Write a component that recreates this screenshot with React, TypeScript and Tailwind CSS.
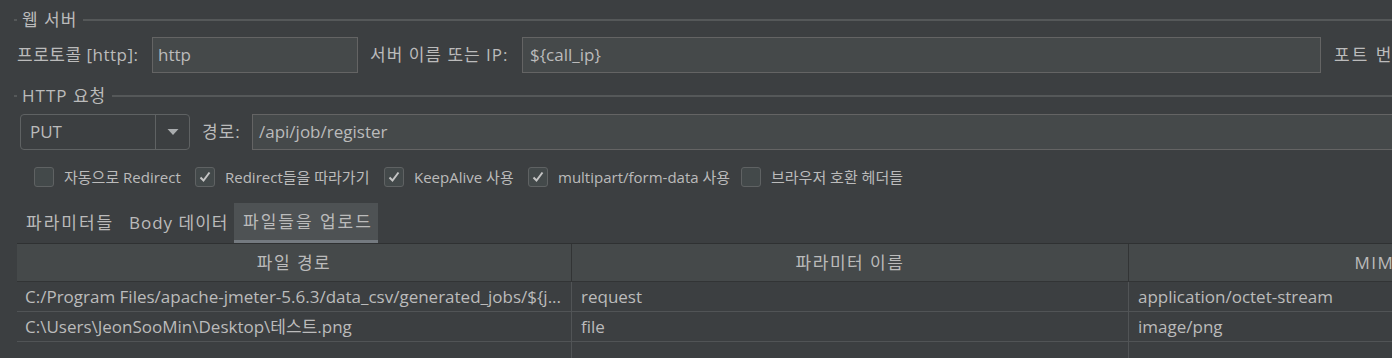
import React from 'react';

const FONT = "font-['Open_Sans','Noto_Sans_CJK_KR',sans-serif]";

interface CheckItem {
  label: string;
  checked: boolean;
  width: string;
}

const checks: CheckItem[] = [
  { label: '자동으로 Redirect', checked: false, width: 'w-[161px]' },
  { label: 'Redirect들을 따라가기', checked: true, width: 'w-[189px]' },
  { label: 'KeepAlive 사용', checked: true, width: 'w-[144px]' },
  { label: 'multipart/form-data 사용', checked: true, width: 'w-[213px]' },
  { label: '브라우저 호환 헤더들', checked: false, width: 'w-[200px]' },
];

const rows = [
  { path: 'C:/Program Files/apache-jmeter-5.6.3/data_csv/generated_jobs/${j...', param: 'request', mime: 'application/octet-stream' },
  { path: 'C:\\Users\\JeonSooMin\\Desktop\\테스트.png', param: 'file', mime: 'image/png' },
  { path: '', param: '', mime: '' },
];

const GroupTitle: React.FC<{ title: string }> = ({ title }) => (
  <div className="flex items-center h-[20px] pl-[14px]">
    <div className="w-[3px] h-[2px] bg-[#555859]" />
    <span className="ml-[5px] whitespace-nowrap tracking-[1px]">{title}</span>
    <div className="flex-1 h-[2px] bg-[#555859] ml-[6px]" />
  </div>
);

const Checkbox: React.FC<{ checked: boolean }> = ({ checked }) => (
  <div className="w-[20px] h-[20px] shrink-0 rounded-[3px] border border-[#5f6263] bg-[#43494a] flex items-center justify-center">
    {checked && (
      <svg width="14" height="14" viewBox="0 0 14 14">
        <path d="M2.5 7.5 L5.5 10.5 L11.5 2.5" fill="none" stroke="#c4c4c4" strokeWidth="2" />
      </svg>
    )}
  </div>
);

export default function App() {
  return (
    <div className={`w-[1392px] h-[358px] overflow-hidden bg-[#3c3f41] text-[#bbbbbb] text-[17px] ${FONT}`}>
      {/* 웹 서버 */}
      <div className="pt-[10px]">
        <GroupTitle title="웹 서버" />
      </div>
      <div className="flex items-center mt-[7px] pl-[17px] whitespace-nowrap">
        <span className="w-[135px] shrink-0 tracking-[0.5px]">프로토콜 [http]:</span>
        <div className="w-[206px] h-[36px] shrink-0 bg-[#45494a] border border-[#646464] flex items-center pl-[5px]">http</div>
        <span className="w-[164px] shrink-0 pl-[12px] tracking-[1px]">서버 이름 또는 IP:</span>
        <div className="w-[799px] h-[36px] shrink-0 bg-[#45494a] border border-[#646464] flex items-center pl-[7px]">{'${call_ip}'}</div>
        <span className="shrink-0 pl-[13px] tracking-[2px]">포트 번호:</span>
      </div>

      {/* HTTP 요청 */}
      <div className="mt-[13px]">
        <GroupTitle title="HTTP 요청" />
      </div>
      <div className="flex items-center mt-[8px] pl-[20px] whitespace-nowrap">
        <div className="w-[170px] h-[36px] shrink-0 rounded-[4px] border border-[#5f6263] bg-[#3c3f41] flex">
          <div className="flex-1 flex items-center pl-[9px]">PUT</div>
          <div className="w-[34px] border-l border-[#5f6263] flex items-center justify-center">
            <svg width="12" height="8" viewBox="0 0 12 8">
              <path d="M0.5 1 L11.5 1 L6 7 Z" fill="#a9acae" />
            </svg>
          </div>
        </div>
        <span className="w-[62px] shrink-0 pl-[12px] tracking-[1px]">경로:</span>
        <div className="w-[1200px] h-[36px] shrink-0 bg-[#45494a] border border-[#646464] flex items-center pl-[6px]">/api/job/register</div>
      </div>

      {/* 체크박스 */}
      <div className="flex items-center mt-[17px] pl-[34px] h-[20px] whitespace-nowrap text-[15px]">
        {checks.map((c) => (
          <div key={c.label} className={`flex items-center shrink-0 ${c.width}`}>
            <Checkbox checked={c.checked} />
            <span className="ml-[10px]">{c.label}</span>
          </div>
        ))}
      </div>

      {/* 탭 */}
      <div className="flex mt-[16px] pl-[17px] h-[40px] whitespace-nowrap">
        <div className="w-[104px] flex items-center pl-[9px] tracking-[2px]">파라미터들</div>
        <div className="w-[113px] flex items-center pl-[8px] tracking-[1px]">Body 데이터</div>
        <div className="w-[144px] flex flex-col bg-[#4e5254]">
          <div className="flex-1 flex items-center pl-[9px] tracking-[2px]">파일들을 업로드</div>
          <div className="h-[3px] bg-[#747a80]" />
        </div>
      </div>

      {/* 테이블 */}
      <div className="ml-[17px] w-[1700px] border-t border-[#2f3132]">
        <div className="flex h-[38px] bg-[#45494a] border-b border-[#323435] tracking-[1.5px]">
          <div className="w-[555px] flex items-center justify-center border-r border-[#323435]">파일 경로</div>
          <div className="w-[557px] flex items-center justify-center border-r border-[#323435]">파라미터 이름</div>
          <div className="w-[542px] flex items-center justify-center">MIME 타입</div>
        </div>
        {rows.map((r, i) => (
          <div key={i} className="flex h-[30px] border-b border-[#515456] whitespace-nowrap">
            <div className="w-[555px] flex items-center pl-[8px] overflow-hidden border-r border-[#515456]">{r.path}</div>
            <div className="w-[557px] flex items-center pl-[9px] border-r border-[#515456]">{r.param}</div>
            <div className="w-[542px] flex items-center pl-[9px]">{r.mime}</div>
          </div>
        ))}
      </div>
    </div>
  );
}
